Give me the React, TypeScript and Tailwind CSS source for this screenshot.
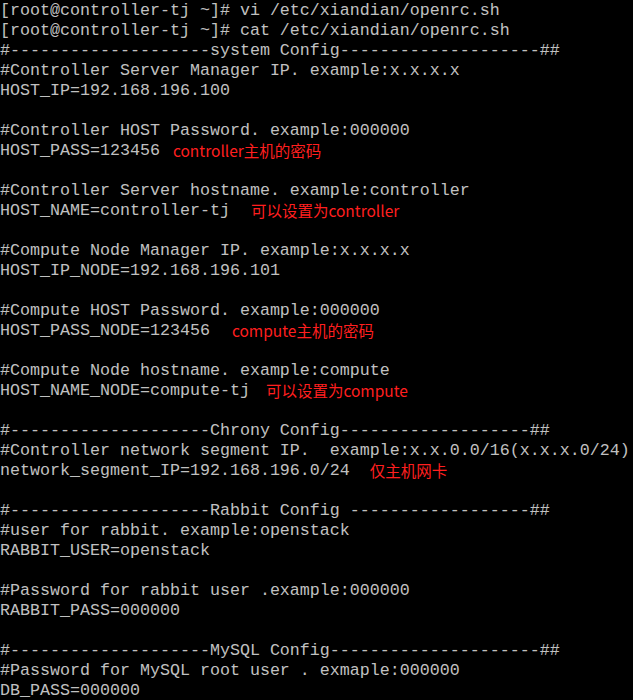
const lines: { text: string; note?: string; gap?: string }[] = [
  { text: "[root@controller-tj ~]# vi /etc/xiandian/openrc.sh" },
  { text: "[root@controller-tj ~]# cat /etc/xiandian/openrc.sh" },
  { text: "#--------------------system Config--------------------##" },
  { text: "#Controller Server Manager IP. example:x.x.x.x" },
  { text: "HOST_IP=192.168.196.100" },
  { text: "" },
  { text: "#Controller HOST Password. example:000000" },
  { text: "HOST_PASS=123456", note: "controller主机的密码", gap: "ml-[13px]" },
  { text: "" },
  { text: "#Controller Server hostname. example:controller" },
  { text: "HOST_NAME=controller-tj", note: "可以设置为controller", gap: "ml-[21px]" },
  { text: "" },
  { text: "#Compute Node Manager IP. example:x.x.x.x" },
  { text: "HOST_IP_NODE=192.168.196.101" },
  { text: "" },
  { text: "#Compute HOST Password. example:000000" },
  { text: "HOST_PASS_NODE=123456", note: "compute主机的密码", gap: "ml-[22px]" },
  { text: "" },
  { text: "#Compute Node hostname. example:compute" },
  { text: "HOST_NAME_NODE=compute-tj", note: "可以设置为compute", gap: "ml-[16px]" },
  { text: "" },
  { text: "#--------------------Chrony Config-------------------##" },
  { text: "#Controller network segment IP.  example:x.x.0.0/16(x.x.x.0/24)" },
  { text: "network_segment_IP=192.168.196.0/24", note: "仅主机网卡", gap: "ml-[20px]" },
  { text: "" },
  { text: "#--------------------Rabbit Config ------------------##" },
  { text: "#user for rabbit. example:openstack" },
  { text: "RABBIT_USER=openstack" },
  { text: "" },
  { text: "#Password for rabbit user .example:000000" },
  { text: "RABBIT_PASS=000000" },
  { text: "" },
  { text: "#--------------------MySQL Config---------------------##" },
  { text: "#Password for MySQL root user . exmaple:000000" },
  { text: "DB_PASS=000000" },
];

export default function App() {
  return (
    <div className="w-[633px] h-[700px] bg-black overflow-hidden pt-[1px]">
      {lines.map((line, i) => (
        <div key={i} className="flex items-center h-[20px]">
          <span className="whitespace-pre text-[16.67px] leading-[20px] text-[#c0c0c0] font-['Liberation_Mono',monospace]">
            {line.text}
          </span>
          {line.note && (
            <span
              className={`${line.gap} whitespace-pre text-[15.5px] leading-[20px] text-[#ff1f1f] -mt-[3px] font-['Noto_Sans_CJK_SC',sans-serif]`}
            >
              {line.note}
            </span>
          )}
        </div>
      ))}
    </div>
  );
}
